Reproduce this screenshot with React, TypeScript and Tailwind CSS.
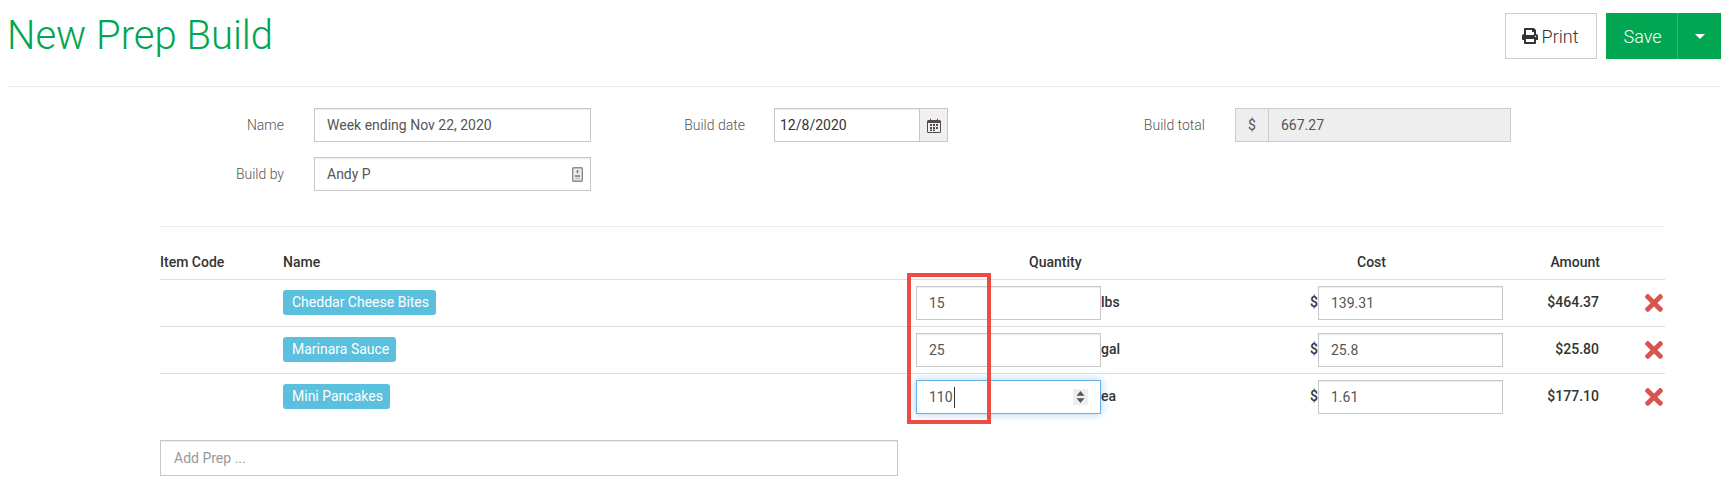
import { FaPrint, FaTimes } from "react-icons/fa";

const rows = [
  { name: "Cheddar Cheese Bites", qty: "15", unit: "lbs", cost: "139.31", amount: "$464.37" },
  { name: "Marinara Sauce", qty: "25", unit: "gal", cost: "25.8", amount: "$25.80" },
  { name: "Mini Pancakes", qty: "110", unit: "ea", cost: "1.61", amount: "$177.10", focused: true },
];

const gridCols = "grid grid-cols-[123px_633px_185px_217px_185px_97px_65px]";

function CalendarIcon() {
  return (
    <svg width="14" height="15" viewBox="0 0 14 15" fill="#544c48">
      <path d="M1.5 2H3V.8h1V2h6V.8h1V2h1.5A1.5 1.5 0 0 1 14 3.5v10a1.5 1.5 0 0 1-1.5 1.5h-11A1.5 1.5 0 0 1 0 13.500v-10A1.500 1.500 0 0 1 1.500 2zM1 5v8.500a.5.500 0 0 0 .5.500h11a.5.500 0 0 0 .5-.5V5z" />
      <path d="M3 6h2v2H3zM6 6h2v2H6zM9 6h2v2H9zM3 9h2v2H3zM6 9h2v2H6zM9 9h2v2H9zM6 11.500h2v1.500H6zM3 11.500h2v1.500H3z" />
    </svg>
  );
}

function ContactIcon() {
  return (
    <svg width="11" height="15" viewBox="0 0 11 15">
      <rect x="0.7" y="0.7" width="9.600" height="13.600" rx="1" fill="#eeeeee" stroke="#8a8a8a" strokeWidth="1.400" />
      <path d="M4.700 3h1.600v3.200H4.700z" fill="#777777" />
      <path d="M3 8.200h5v1.600H3z" fill="#777777" />
      <path d="M3 10.800h5v1.400H3z" fill="#bbbbbb" />
    </svg>
  );
}

function SpinnerIcon() {
  return (
    <span className="flex h-[16px] w-[15px] items-center justify-center bg-[#eeeeee]">
      <svg width="9" height="12" viewBox="0 0 9 12" fill="#555555">
        <path d="M4.500 0 8.500 4.800H.5zM.5 7.200h8L4.500 12z" />
      </svg>
    </span>
  );
}

function TextBox({ value, width }: { readonly value: string; readonly width: string }) {
  return (
    <div className={`flex h-[34px] items-center border border-[#c8c8c8] bg-white pl-[12px] text-[14px] font-normal text-[#555555] shadow-[inset_0_1px_1px_rgba(0,0,0,0.075)] ${width}`}>
      {value}
    </div>
  );
}

function QuantityInput({ value, focused }: { readonly value: string; readonly focused?: boolean }) {
  if (focused) {
    return (
      <div className="flex h-[34px] w-[185px] items-center justify-between border border-[#66afe9] bg-white pl-[12px] pr-[12px] text-[14px] font-normal text-[#555555] shadow-[0_0_8px_rgba(102,175,233,0.6)]">
        <span className="border-r border-[#333333] pr-px">{value}</span>
        <SpinnerIcon />
      </div>
    );
  }
  return <TextBox value={value} width="w-[185px]" />;
}

export default function App() {
  return (
    <div className="relative h-[503px] w-[1727px] overflow-hidden bg-white font-['Roboto',sans-serif] text-[14px] text-[#333333]">
      {/* page header */}
      <div className="ml-[7px] mr-[6px] flex h-[87px] items-start justify-between border-b border-[#eeeeee] pt-[13px]">
        <h1 className="text-[40px] font-light leading-[46px] text-[#00a651]">New Prep Build</h1>
        <div className="flex">
          <button className="flex h-[46px] w-[92px] items-center justify-center gap-[4px] border border-[#cccccc] bg-white text-[18px] font-light text-[#333333]">
            <FaPrint className="-ml-[2px] text-[16px]" />
            Print
          </button>
          <div className="ml-[9px] flex h-[46px] bg-[#00a651] text-white">
            <button className="flex w-[72px] items-center justify-center border-r border-[#3fb265] pl-[2px] text-[18px] font-light">Save</button>
            <button className="flex w-[43px] items-center justify-center">
              <span className="h-0 w-0 border-x-[5px] border-t-[5px] border-x-transparent border-t-white" />
            </button>
          </div>
        </div>
      </div>

      <div className="ml-[160px] w-[1505px]">
        {/* form */}
        <div className="flex border-b border-[#eeeeee] pb-[35px] pt-[21px] font-light">
          <div className="flex flex-col gap-[15px]">
            <div className="flex items-center">
              <label className="w-[124px] text-right text-[#555555]">Name</label>
              <div className="ml-[30px]">
                <TextBox value="Week ending Nov 22, 2020" width="w-[277px]" />
              </div>
            </div>
            <div className="flex items-center">
              <label className="w-[124px] text-right text-[#555555]">Build by</label>
              <div className="ml-[30px] flex h-[34px] w-[277px] items-center justify-between border border-[#c8c8c8] pl-[12px] pr-[7px] font-normal text-[#555555] shadow-[inset_0_1px_1px_rgba(0,0,0,0.075)]">
                Andy P
                <ContactIcon />
              </div>
            </div>
          </div>
          <div className="flex h-[34px] items-center">
            <label className="w-[154px] text-right text-[#555555]">Build date</label>
            <div className="ml-[29px] flex h-[34px] w-[174px] border border-[#c8c8c8] font-normal shadow-[inset_0_1px_1px_rgba(0,0,0,0.075)]">
              <div className="flex flex-1 items-center pl-[5px] text-[#333333]">12/8/2020</div>
              <div className="flex w-[28px] items-center justify-center border-l border-[#c8c8c8] bg-[#f0f0f0]">
                <CalendarIcon />
              </div>
            </div>
          </div>
          <div className="flex h-[34px] items-center">
            <label className="w-[257px] text-right text-[#555555]">Build total</label>
            <div className="ml-[30px] flex h-[34px] w-[276px] border border-[#cccccc] bg-[#eeeeee] font-normal text-[#555555]">
              <div className="flex w-[33px] items-center justify-center border-r border-[#cccccc]">$</div>
              <div className="flex items-center pl-[12px]">667.27</div>
            </div>
          </div>
        </div>

        {/* table */}
        <div className={`${gridCols} h-[52px] items-end pb-[6px] font-medium text-[#333333]`}>
          <div>Item Code</div>
          <div>Name</div>
          <div className="whitespace-nowrap pl-[113px]">Quantity</div>
          <div />
          <div className="pl-[39px]">Cost</div>
          <div className="text-right">Amount</div>
          <div />
        </div>
        {rows.map((row) => (
          <div key={row.name} className={`${gridCols} h-[47px] items-center border-t border-[#dddddd] font-medium`}>
            <div />
            <div className="mb-[2px]">
              <span className="inline-block rounded-[3px] bg-[#5bc0de] pl-[9px] pr-[7px] py-[3px] text-[14px] font-normal leading-[19px] text-white">{row.name}</span>
            </div>
            <QuantityInput value={row.qty} focused={row.focused} />
            <div className="mb-[2px] flex items-center justify-between">
              <span>{row.unit}</span>
              <span>$</span>
            </div>
            <TextBox value={row.cost} width="w-[185px]" />
            <div className="mb-[2px] pr-px text-right">{row.amount}</div>
            <div className="flex justify-end">
              <FaTimes className="-mr-[2px] text-[26px] text-[#d9534f]" />
            </div>
          </div>
        ))}

        <div className="mt-[20px] flex h-[36px] w-[738px] items-center border border-[#c8c8c8] pl-[13px] text-[#999999] shadow-[inset_0_1px_1px_rgba(0,0,0,0.075)]">Add Prep ...</div>
      </div>

      {/* red highlight drawn over the quantity column */}
      <div className="absolute left-[907px] top-[273px] h-[151px] w-[84px] border-4 border-[#ef4b45]" />
    </div>
  );
}
